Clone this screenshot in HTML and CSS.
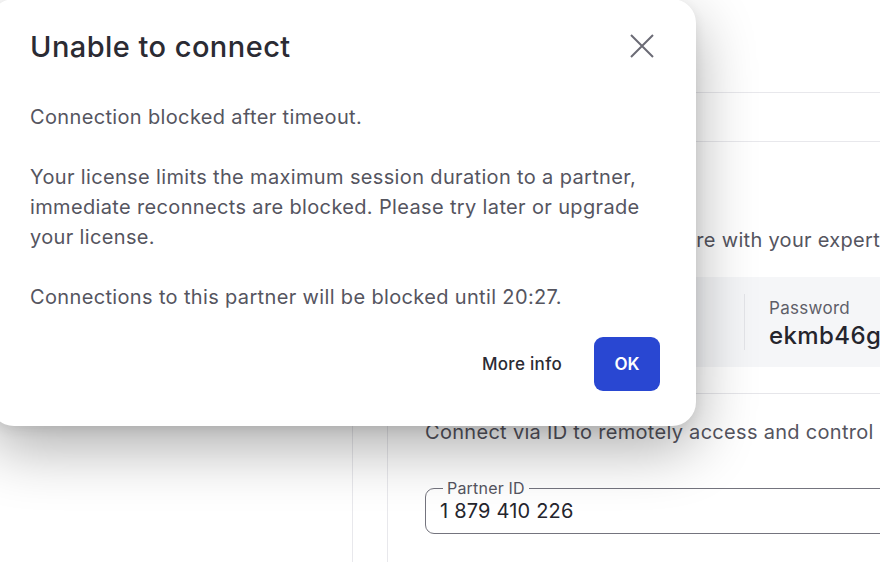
FILE: index.html
```html
<!DOCTYPE html>
<html>
<head>
<meta charset="utf-8">
<link rel="stylesheet" href="styles.css">
</head>
<body>
<div class="app">
  <aside class="sidebar"></aside>
  <div class="rail"></div>
  <main class="main">
    <header class="topbar"></header>
    <nav class="tabs"></nav>
    <section class="content">
      <p class="lead lead1"><span>Share this ID and password to share with your expert</span></p>
      <div class="creds">
        <div class="cred cred-id">
          <span class="cred-label">Your ID</span>
          <span class="cred-value">1 234 567 890</span>
        </div>
        <div class="cred cred-pw">
          <span class="cred-label">Password</span>
          <span class="cred-value">ekmb46gd</span>
        </div>
      </div>
      <div class="sep"></div>
      <p class="lead lead2">Connect via ID to remotely access and control a device</p>
      <div class="field">
        <span class="field-label">Partner ID</span>
        <span class="field-value">1 879 410 226</span>
      </div>
    </section>
  </main>
</div>

<div class="dialog" role="dialog">
  <div class="dialog-head">
    <h1 class="dialog-title">Unable to connect</h1>
    <button class="close" aria-label="Close">
      <svg width="26" height="26" viewBox="0 0 26 26"><path d="M2 2 L24 24 M24 2 L2 24" stroke="#6b6b75" stroke-width="2" fill="none"/></svg>
    </button>
  </div>
  <div class="dialog-body">
    <p>Connection blocked after timeout.</p>
    <p>Your license limits the maximum session duration to a partner, immediate reconnects are blocked. Please try later or upgrade your license.</p>
    <p>Connections to this partner will be blocked until 20:27.</p>
  </div>
  <div class="dialog-actions">
    <button class="btn-text">More info</button>
    <button class="btn-primary">OK</button>
  </div>
</div>
</body>
</html>
```
FILE: styles.css
```css
* { box-sizing: border-box; }
html, body { margin: 0; padding: 0; }
body {
  width: 880px;
  height: 562px;
  overflow: hidden;
  background: #ffffff;
  font-family: Inter, "Noto Sans", sans-serif;
  color: #55555f;
  position: relative;
}
.app {
  display: flex;
  height: 562px;
}
.sidebar {
  width: 353px;
  flex: none;
  border-right: 1px solid #e8e8ec;
}
.rail {
  width: 35px;
  flex: none;
  border-right: 1px solid #e8e8ec;
}
.main {
  flex: 1;
  min-width: 0;
  display: flex;
  flex-direction: column;
  overflow: hidden;
}
.topbar {
  height: 93px;
  flex: none;
  border-bottom: 1px solid #e8e8ec;
}
.tabs {
  height: 49px;
  flex: none;
  border-bottom: 1px solid #e8e8ec;
}
.content {
  padding: 0 0 0 37px;
}
.lead {
  margin: 85px 0 0;
  font-size: 20px;
  letter-spacing: 0.3px;
  line-height: 26px;
  white-space: nowrap;
  color: #55555f;
}
.lead1 {
  display: flex;
  justify-content: flex-end;
  margin-right: 0;
}
.lead1 span { flex: none; }
.creds {
  margin-top: 24px;
  height: 90px;
  background: #f5f6f8;
  display: flex;
  align-items: center;
  border-radius: 6px 0 0 6px;
  width: 600px;
}
.cred {
  display: flex;
  flex-direction: column;
  gap: 2px;
}
.cred-id {
  width: 320px;
  padding-left: 20px;
  border-right: 1px solid #e3e4e8;
  height: 56px;
}
.cred-pw {
  padding-left: 24px;
  padding-top: 4px;
}
.cred-label {
  font-size: 17px;
  letter-spacing: 0.3px;
  color: #5e5e68;
  line-height: 22px;
}
.cred-value {
  font-size: 24px;
  letter-spacing: 0.4px;
  font-weight: 500;
  color: #25252d;
  line-height: 30px;
}
.sep {
  margin-top: 26px;
  border-top: 1px solid #e6e6ea;
  width: 600px;
}
.lead2 {
  margin-top: 25px;
}
.field {
  margin-top: 43px;
  border: 1px solid #74747e;
  border-radius: 9px;
  height: 46px;
  padding: 0 14px;
  width: 600px;
  position: relative;
  display: flex;
  align-items: center;
}
.field-label {
  position: absolute;
  left: 17px;
  top: -11px;
  font-size: 16px;
  letter-spacing: 0.2px;
  color: #55555f;
  padding: 0 4px;
  line-height: 20px;
  background: #ffffff;
}
.field-value {
  font-size: 20px;
  letter-spacing: 0.2px;
  color: #25252d;
  line-height: 24px;
}

/* dialog */
.dialog {
  position: absolute;
  left: -10px;
  top: -1px;
  width: 706px;
  height: 427px;
  background: #ffffff;
  border-radius: 24px;
  box-shadow: 0 22px 60px rgba(0,0,0,0.32), 0 4px 12px rgba(0,0,0,0.08);
  padding: 30px 36px 0 40px;
  display: flex;
  flex-direction: column;
}
.dialog-head {
  display: flex;
  align-items: center;
  justify-content: space-between;
  height: 34px;
}
.dialog-title {
  margin: 0;
  font-size: 29px;
  font-weight: 500;
  color: #2b2b33;
  letter-spacing: 0.45px;
}
.close {
  border: 0;
  background: none;
  padding: 0;
  width: 26px;
  height: 26px;
  margin-right: 5px;
  display: flex;
}
.dialog-body {
  margin-top: 39px;
}
.dialog-body p {
  margin: 0 0 30px;
  font-size: 20px;
  letter-spacing: 0.35px;
  line-height: 30px;
  color: #55555f;
  width: 625px;
}
.dialog-body p:last-child { margin-bottom: 0; }
.dialog-actions {
  display: flex;
  justify-content: flex-end;
  align-items: center;
  gap: 32px;
  margin-top: 25px;
}
.btn-text {
  border: 0;
  background: none;
  font-family: inherit;
  font-size: 17px;
  letter-spacing: 0.3px;
  font-weight: 500;
  color: #2b2b33;
  padding: 0;
}
.btn-primary {
  border: 0;
  background: #2947d2;
  color: #ffffff;
  font-family: inherit;
  font-size: 17px;
  font-weight: 600;
  width: 66px;
  height: 54px;
  border-radius: 9px;
}
```
